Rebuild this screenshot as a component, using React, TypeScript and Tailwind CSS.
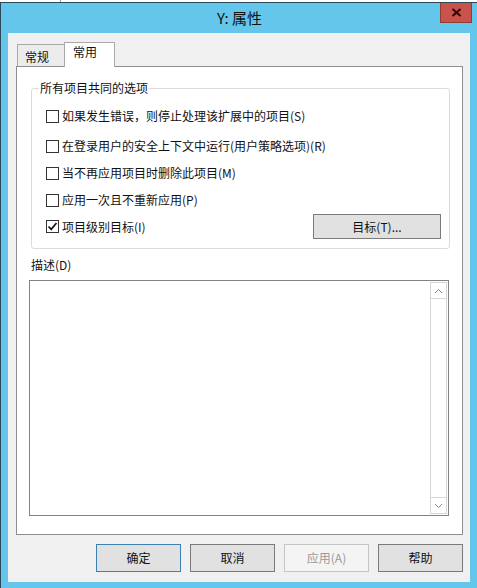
import React from "react";

const FONT = "font-['Noto_Sans_CJK_SC','Noto_Sans',sans-serif]";

function Check({ checked }: { checked?: boolean }) {
  return (
    <div className="w-[13px] h-[13px] border border-[#333333] bg-white flex items-center justify-center shrink-0">
      {checked && (
        <svg width="11" height="11" viewBox="0 0 11 11">
          <path d="M1.5 5.5 L4.2 8.3 L9.5 2" fill="none" stroke="#1a1a1a" strokeWidth="1.8" />
        </svg>
      )}
    </div>
  );
}

function Row({ label, checked, mt }: { label: string; checked?: boolean; mt: string }) {
  return (
    <div className={`flex items-center h-[20px] ml-[14px] ${mt}`}>
      <Check checked={checked} />
      <span className="ml-[3px] text-[12px] leading-[20px] text-[#111]">{label}</span>
    </div>
  );
}

function Btn({ label, kind }: { label: string; kind?: "default" | "disabled" }) {
  const cls =
    kind === "default"
      ? "border-[#3c7fb1] bg-[#e1e1e1] text-[#111]"
      : kind === "disabled"
      ? "border-[#c6c6c6] bg-[#f4f4f4] text-[#9a9a9a]"
      : "border-[#7a7a7a] bg-[#e1e1e1] text-[#111]";
  return (
    <div className={`w-[85px] h-[28px] border flex items-center justify-center text-[12px] ${cls}`}>
      {label}
    </div>
  );
}

export default function App() {
  return (
    <div className={`w-[477px] h-[588px] bg-white overflow-hidden ${FONT}`}>
      <div className="h-[2px] flex">
        <div className="w-[61px] border-r border-[#8a9aa4]" />
      </div>
      <div className="h-[586px] border-t border-l border-[#2d4a5a] bg-[#63c6ea] flex flex-col">
        {/* Title bar */}
        <div className="relative h-[30px] flex items-center justify-center">
          <span className="text-[15px] leading-[20px] text-[#111] ml-[1px] mt-[-1px]">Y: 属性</span>
          <div className="absolute right-[5px] top-0 w-[32px] h-[20px] bg-[#c9524c] border border-[#8f3b36] border-t-0 flex items-center justify-center">
            <svg width="11" height="9" viewBox="0 0 11 9">
              <path d="M1.5 1 L9.5 8 M9.5 1 L1.5 8" stroke="#2a0a08" strokeWidth="2.2" />
            </svg>
          </div>
        </div>
        {/* Client */}
        <div className="ml-[7px] w-[462px] h-[549px] bg-[#f0f0f0] flex flex-col">
          {/* Tabs */}
          <div className="mt-[9px] ml-[9px] flex items-end h-[24px]">
            <div className="w-[47px] h-[22px] border-l border-t border-[#a9a9a9] bg-[#ececec] text-[12px] leading-[22px] pl-[7px] pt-[1px] text-[#111]">
              常规
            </div>
            <div className="relative z-10 w-[51px] h-[25px] -mb-px border-l border-t border-r border-[#a9a9a9] bg-white text-[12px] leading-[18px] pl-[8px] text-[#111]">
              常用
            </div>
          </div>
          {/* Panel */}
          <div className="ml-[8px] w-[447px] h-[469px] border border-[#8f8f8f] bg-white flex flex-col">
            {/* Group box */}
            <div className="relative mt-[21px] ml-[14px] w-[419px] h-[161px] border border-[#dcdcdc] rounded-[3px] flex flex-col">
              <span className="absolute left-[7px] top-[-10px] bg-white px-[1px] text-[12px] leading-[18px] text-[#111]">
                所有项目共同的选项
              </span>
              <Row mt="mt-[17px]" label="如果发生错误，则停止处理该扩展中的项目(S)" />
              <Row mt="mt-[10px]" label="在登录用户的安全上下文中运行(用户策略选项)(R)" />
              <Row mt="mt-[7px]" label="当不再应用项目时删除此项目(M)" />
              <Row mt="mt-[7px]" label="应用一次且不重新应用(P)" />
              <div className="flex items-center h-[25px] ml-[14px] mt-[4px]">
                <Check checked />
                <span className="ml-[3px] text-[12px] leading-[20px] text-[#111]">项目级别目标(I)</span>
                <div className="ml-auto mr-[8px] w-[128px] h-[25px] border border-[#7a7a7a] bg-[#e1e1e1] flex items-center justify-center text-[12px] text-[#111]">
                  目标(T)...
                </div>
              </div>
            </div>
            {/* Description */}
            <div className="mt-[8px] ml-[14px] h-[16px] text-[12px] leading-[16px] text-[#111]">描述(D)</div>
            <div className="mt-[7px] ml-[12px] w-[420px] h-[236px] border border-[#828282] bg-white flex">
              <div className="flex-1" />
              <div className="w-[17px] mt-[1px] mb-[1px] mr-[1px] border border-[#d6d6d6] flex flex-col">
                <div className="h-[16px] border-b border-[#d6d6d6] flex items-center justify-center">
                  <svg width="9" height="6" viewBox="0 0 9 6">
                    <path d="M1 5 L4.5 1.5 L8 5" fill="none" stroke="#8a8a8a" strokeWidth="1" />
                  </svg>
                </div>
                <div className="flex-1" />
                <div className="h-[16px] border-t border-[#d6d6d6] flex items-center justify-center">
                  <svg width="9" height="6" viewBox="0 0 9 6">
                    <path d="M1 1 L4.5 4.5 L8 1" fill="none" stroke="#8a8a8a" strokeWidth="1" />
                  </svg>
                </div>
              </div>
            </div>
          </div>
          {/* Buttons */}
          <div className="mt-[9px] ml-[88px] flex gap-[9px]">
            <Btn label="确定" kind="default" />
            <Btn label="取消" />
            <Btn label="应用(A)" kind="disabled" />
            <Btn label="帮助" />
          </div>
        </div>
      </div>
    </div>
  );
}
